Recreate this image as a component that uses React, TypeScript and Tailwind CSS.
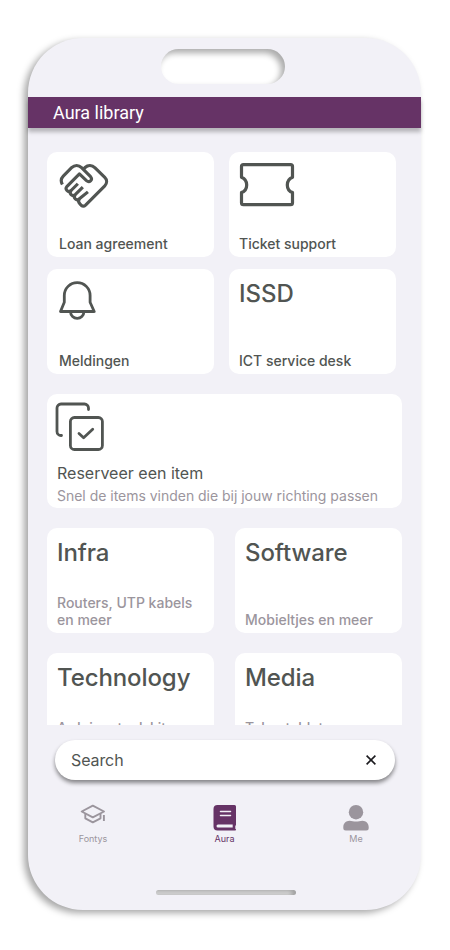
import React from 'react';

const HandshakeIcon = () => (
  <svg className="block" width="51" height="47" viewBox="0 0 52 48" fill="none" stroke="#515552" strokeWidth="3.2" strokeLinejoin="round">
    <path d="M3.400 22C1.500 18.500 2 15.600 4.300 13.300L12.800 4.800C16 1.800 20 1.800 23 4.800L32.200 14C34.800 17.200 31 20.600 28 18L20.800 11.200L8.200 23.800C5.500 26.800 9.200 30.800 12.300 28.100L19.200 21.200" />
    <path d="M12.300 28.100C9.800 31.200 13.400 34.900 16.500 32.400L24.300 24.700" />
    <path d="M16.500 32.400C14 35.600 17.700 39.100 20.800 36.600L29.500 29.500" />
    <path d="M20.800 36.600C19 38.800 20 40.500 21.500 42L22.600 43.100C24 44.300 25.700 44.300 27.100 43L46.700 23.300C49.200 20.600 49.200 17.200 46.700 14.700L36.800 4.900C33.600 1.900 29.500 1.900 26.600 4.600L24.700 6.400" />
  </svg>
);

const TicketIcon = () => (
  <svg className="block" width="56" height="44" viewBox="0 0 56 44" fill="none" stroke="#515552" strokeWidth="3.2" strokeLinejoin="round">
    <path d="M4.400 1.700H51.600Q53.500 1.700 53.500 3.600V14.200A8.300 8.300 0 0 0 53.500 29.600V39.800Q53.500 41.700 51.600 41.700H4.400Q2.500 41.700 2.500 39.800V29.600A8.300 8.300 0 0 0 2.500 14.200V3.600Q2.500 1.700 4.400 1.700Z" />
  </svg>
);

const BellIcon = () => (
  <svg className="block" width="38" height="40" viewBox="0 0 38 40" fill="none" stroke="#515552" strokeWidth="2.8" strokeLinejoin="round" strokeLinecap="round">
    <path d="M6.300 22V15.500A12.900 12.900 0 0 1 32.100 15.500V22.300L36.200 31.500H2.500L6.300 22.300Z" />
    <path d="M12.600 32.200A6.600 6.200 0 0 0 25.800 32.200" />
  </svg>
);

const ReserveIcon = () => (
  <svg className="block" width="50" height="50" viewBox="0 0 50 50" fill="none" stroke="#515552" strokeWidth="2.8" strokeLinejoin="round" strokeLinecap="round">
    <path d="M33.500 7.500V6A4 4 0 0 0 29.500 2H6A4 4 0 0 0 2 6V29.500A4 4 0 0 0 6 33.500H6.500" />
    <rect x="15.400" y="15.500" width="32" height="32" rx="4" />
    <path d="M24 31.500L28.600 35.700L37.700 27.200" />
  </svg>
);

const CapIcon = () => (
  <svg className="block" width="26" height="20" viewBox="0 0 26 20" fill="none" stroke="#9b959d" strokeWidth="1.900" strokeLinejoin="round">
    <path d="M12.800 1.700L24 7.500L12.800 13.300L1.700 7.500Z" />
    <path d="M5.300 9.500V14.300L12.800 18.300L20.500 14.300V9.500M23.900 11V17" />
  </svg>
);

const BookIcon = () => (
  <svg className="block" width="24" height="27" viewBox="0 -0.5 24 27">
    <path fill="#663366" d="M4.500 .5H21.500Q23 .5 23 2V20.200Q23 21 22.300 21.200V24.300Q23 24.500 23 25.300Q23 26 22.200 26H4.500Q.5 26 .5 22V4.500Q.5 .5 4.500 .5Z" />
    <path fill="none" stroke="#f2f1f7" strokeWidth="1.500" strokeLinecap="round" d="M7.500 7H17.500M7.500 11H17.500" />
    <path fill="#f2f1f7" d="M5 20H19.700V23H5A1.500 1.500 0 0 1 5 20Z" />
  </svg>
);

const PersonIcon = () => (
  <svg className="block" width="26" height="27" viewBox="0 -0.5 26 27" fill="#9b959d">
    <circle cx="13" cy="7.700" r="7.200" />
    <path d="M6.500 16.200C9 16.200 10.500 17.100 13 17.100C15.500 17.100 17 16.200 19.500 16.200C23 16.200 25.700 19 25.700 22.500V23.500Q25.700 26 23.200 26H2.800Q.3 26 .3 23.500V22.500C.3 19 3 16.200 6.500 16.200Z" />
  </svg>
);

function ActionCard({ icon, label, pad }: { icon: React.ReactNode; label: string; pad: string }) {
  return (
    <div className={`flex h-[105px] w-[167px] flex-col justify-between rounded-[10px] bg-white pb-1 text-[#515552] ${pad}`}>
      <div>{icon}</div>
      <div className="whitespace-nowrap text-[14px] font-medium leading-[18px]">{label}</div>
    </div>
  );
}

function CategoryCard({ title, text }: { title: string; text: string }) {
  return (
    <div className="flex h-[105px] w-[167px] flex-col justify-between rounded-[10px] bg-white px-[10px] pb-[5px] pt-2.5">
      <div className="text-[24px] font-medium leading-[29px] tracking-[-0.1px] text-[#515552]">{title}</div>
      <div className="text-[14px] font-medium leading-[17px] text-[#9b959d]">{text}</div>
    </div>
  );
}

export default function App() {
  return (
    <div className="h-[950px] w-[450px] overflow-hidden bg-white pl-7 pt-[38px] font-['Inter',sans-serif]">
      <div className="flex h-[872px] w-[393px] flex-col rounded-[55px] bg-[#f2f1f7] shadow-[-4px_3px_7px_rgba(0,0,0,0.35)]">
        <div className="ml-[133px] mt-[11px] h-[35px] w-[124px] shrink-0 rounded-full bg-white shadow-[inset_-4px_4px_6px_rgba(0,0,0,0.33)]" />
        <header className="mt-[13px] flex h-[31px] shrink-0 items-center bg-[#663366] pl-[25px] font-['Roboto',sans-serif] text-[18px] text-white shadow-[0_4px_4px_rgba(0,0,0,0.25)]">
          Aura library
        </header>
        <main className="h-[597px] shrink-0 overflow-hidden pl-[19px] pt-6">
          <div className="grid grid-cols-[167px_167px] gap-x-[15px] gap-y-3">
            <ActionCard pad="pl-3 pt-[11px]" icon={<HandshakeIcon />} label="Loan agreement" />
            <ActionCard pad="pl-2.5 pt-[11px]" icon={<TicketIcon />} label="Ticket support" />
            <ActionCard pad="pl-3 pt-[11px]" icon={<div className="-ml-px"><BellIcon /></div>} label="Meldingen" />
            <ActionCard pad="pl-2.5 pt-2.5" icon={<span className="block text-[24px] font-medium leading-[29px]">ISSD</span>} label="ICT service desk" />
          </div>
          <section className="mt-5 h-[114px] w-[355px] rounded-[10px] bg-white pt-2">
            <div className="pl-2"><ReserveIcon /></div>
            <div className="pl-2.5 pt-[11px] text-[16px] leading-5 text-[#515552]">Reserveer een item</div>
            <div className="whitespace-nowrap pl-2.5 pt-1 text-[14px] leading-[18px] tracking-[-0.02px] text-[#9b959d]">Snel de items vinden die bij jouw richting passen</div>
          </section>
          <div className="mt-5 grid grid-cols-[167px_167px] gap-x-[21px] gap-y-5">
            <CategoryCard title="Infra" text="Routers, UTP kabels en meer" />
            <CategoryCard title="Software" text="Mobieltjes en meer" />
            <CategoryCard title="Technology" text="Arduino, toolskits, en meer" />
            <CategoryCard title="Media" text="Tekentablets, camera en meer" />
          </div>
        </main>
        <div className="ml-[27px] mt-[15px] flex h-10 w-[340px] shrink-0 items-center justify-between rounded-full bg-white pl-4 pr-[19px] text-[16px] text-[#515552] shadow-[0_3px_4px_rgba(0,0,0,0.45)]">
          <span className="tracking-[-0.1px]">Search</span>
          <svg width="10" height="10" viewBox="0 0 10 10" stroke="#1c1b1f" strokeWidth="1.600">
            <path d="M.6 .6L9.400 9.400M9.400 .6L.6 9.400" />
          </svg>
        </div>
        <nav className="mt-6 flex h-10 shrink-0 justify-between pl-[45px] pr-[52px] text-[9px] leading-[11px] text-[#9b959d]">
          <div className="flex w-10 flex-col items-center justify-between"><CapIcon /><span>Fontys</span></div>
          <div className="-ml-[7px] flex w-10 flex-col items-center justify-between text-[#663366]"><BookIcon /><span>Aura</span></div>
          <div className="flex w-[26px] flex-col items-center justify-between"><PersonIcon /><span>Me</span></div>
        </nav>
        <div className="ml-32 mt-[46px] h-[5px] w-[140px] shrink-0 rounded-full bg-[#d9d9d9] shadow-[inset_-4px_1px_4px_rgba(0,0,0,0.25)]" />
      </div>
    </div>
  );
}
